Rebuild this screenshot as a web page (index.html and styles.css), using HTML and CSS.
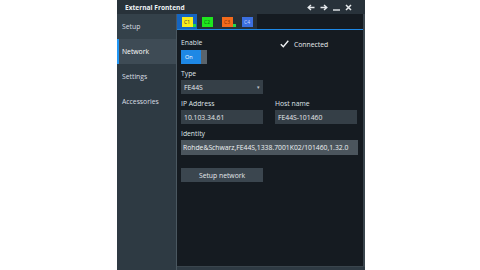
FILE: index.html
```html
<!DOCTYPE html>
<html lang="en">
<head>
  <meta charset="UTF-8" />
  <title>External Frontend</title>
  <link rel="stylesheet" href="styles.css">
</head>
<body>
  <div class="window">
    <div class="titlebar">
      <span class="title">External Frontend</span>
      <div class="title-icons">
        <svg width="8" height="7" viewBox="0 0 8 7"><path d="M7.5 3.5H1.5M4 1L1.2 3.5L4 6" stroke="#e6eaed" stroke-width="1.4" fill="none"/></svg>
        <svg width="8" height="7" viewBox="0 0 8 7"><path d="M0.5 3.5H6.5M4 1L6.8 3.5L4 6" stroke="#e6eaed" stroke-width="1.4" fill="none"/></svg>
        <svg width="7" height="7" viewBox="0 0 7 7"><path d="M0 6H7" stroke="#e6eaed" stroke-width="1.4"/></svg>
        <svg width="7" height="7" viewBox="0 0 7 7"><path d="M1 1L6 6M6 1L1 6" stroke="#e6eaed" stroke-width="1.5"/></svg>
      </div>
    </div>
    <div class="main">
      <div class="sidebar">
        <div class="nav-item">Setup</div>
        <div class="nav-item active">Network</div>
        <div class="nav-item">Settings</div>
        <div class="nav-item">Accessories</div>
      </div>
      <div class="content">
        <div class="tabs">
          <div class="tab selected"><span class="chip c1">C1</span><span class="dot"></span></div>
          <div class="tab"><span class="chip c2">C2</span></div>
          <div class="tab"><span class="chip c3">C3</span><span class="dot"></span></div>
          <div class="tab"><span class="chip c4">C4</span></div>
        </div>
        <div class="panel">
          <div class="row">
            <div class="field">
              <div class="label">Enable</div>
              <div class="toggle"><span class="toggle-on">On</span><span class="toggle-knob"></span></div>
            </div>
            <div class="status">
              <svg width="9" height="8" viewBox="0 0 9 8"><path d="M0.8 4.2L3.3 6.8L8.3 0.8" stroke="#eef1f3" stroke-width="1.4" fill="none"/></svg>
              <span>Connected</span>
            </div>
          </div>
          <div class="field">
            <div class="label">Type</div>
            <div class="box select">FE44S<span class="arrow">▾</span></div>
          </div>
          <div class="row">
            <div class="field">
              <div class="label">IP Address</div>
              <div class="box">10.103.34.61</div>
            </div>
            <div class="field">
              <div class="label">Host name</div>
              <div class="box">FE44S-101460</div>
            </div>
          </div>
          <div class="field">
            <div class="label">Identity</div>
            <div class="box wide">Rohde&amp;Schwarz,FE44S,1338.7001K02/101460,1.32.0</div>
          </div>
          <div class="btn">Setup network</div>
        </div>
      </div>
    </div>
  </div>
</body>
</html>
```
FILE: styles.css
```css
body {
  margin: 0;
  background: #ffffff;
  font-family: "Open Sans", sans-serif;
  font-size: 6.8px;
  color: #dde2e6;
}

.window {
  margin-left: 117px;
  width: 248px;
  height: 270px;
  display: flex;
  flex-direction: column;
  background: #2e3a43;
}

.titlebar {
  height: 14px;
  display: flex;
  align-items: center;
  justify-content: space-between;
  padding: 0 13px 0 8px;
  background: #28323a;
}

.title {
  font-weight: bold;
  font-size: 6.6px;
  color: #eef1f3;
}

.title-icons {
  display: flex;
  align-items: center;
  gap: 5px;
}

.main {
  flex: 1;
  display: flex;
}

/* Sidebar */
.sidebar {
  width: 60px;
  background: #2e3a43;
  border-right: 1px solid #4a5760;
}

.nav-item {
  height: 25px;
  display: flex;
  align-items: center;
  padding-left: 5px;
  color: #d9dfe3;
}

.nav-item:first-child {
  background: #34414a;
}

.nav-item.active {
  background: #3e4b55;
  border-left: 2px solid #2196f3;
  padding-left: 3px;
  color: #ffffff;
}

/* Content */
.content {
  flex: 1;
  background: #151b21;
  display: flex;
  flex-direction: column;
  border-right: 2px solid #3a454d;
  border-bottom: 1px solid #3a454d;
  margin-bottom: 3px;
}

.tabs {
  height: 15px;
  display: flex;
  border-bottom: 1px solid #1e88e5;
}

.tab {
  width: 20px;
  display: flex;
  align-items: center;
  justify-content: center;
  background: #262f37;
  position: relative;
}

.tab.selected {
  background: #1565c0;
}

.chip {
  width: 11px;
  height: 10px;
  font-size: 5px;
  display: flex;
  align-items: center;
  justify-content: center;
  color: #333;
}

.c1 { background: #f8ec1c; }
.c2 { background: #1ee61e; color: #0a6a0a; }
.c3 { background: #f26a1b; color: #7a2a00; }
.c4 { background: #3b6fe0; color: #c8d6ff; }

.dot {
  position: absolute;
  right: 1px;
  bottom: 2px;
  width: 3px;
  height: 3px;
  background: #21d94a;
}

.panel {
  padding: 9px 5px 0 4px;
  display: flex;
  flex-direction: column;
  gap: 6px;
}

.row {
  display: flex;
  gap: 12px;
}

.field {
  display: flex;
  flex-direction: column;
  gap: 2px;
}

.label {
  height: 8px;
  line-height: 8px;
  color: #dfe4e8;
}

.toggle {
  display: flex;
  height: 14px;
  width: 26px;
  margin-top: 1px;
}

.toggle-on {
  flex: 1;
  background: #1e88e5;
  color: #ffffff;
  font-size: 5.5px;
  display: flex;
  align-items: center;
  padding-left: 4px;
}

.toggle-knob {
  width: 6px;
  background: #5a646c;
}

.status {
  display: flex;
  align-items: center;
  gap: 5px;
  height: 10px;
  margin-left: 61px;
  color: #e8ecef;
}

.box {
  width: 82px;
  height: 14px;
  box-sizing: border-box;
  background: #353f47;
  display: flex;
  align-items: center;
  padding-left: 3px;
  color: #e4e8eb;
}

.select {
  justify-content: space-between;
  padding-right: 3px;
}

.arrow {
  font-size: 5px;
  color: #c0c6cb;
}

.box.wide {
  width: 177px;
  height: 15px;
  background: #4b555d;
  padding-left: 2px;
  color: #eef1f3;
}

.btn {
  width: 82px;
  height: 14px;
  margin-top: 7px;
  background: #3b464f;
  display: flex;
  align-items: center;
  justify-content: center;
  color: #e4e8eb;
}
```
